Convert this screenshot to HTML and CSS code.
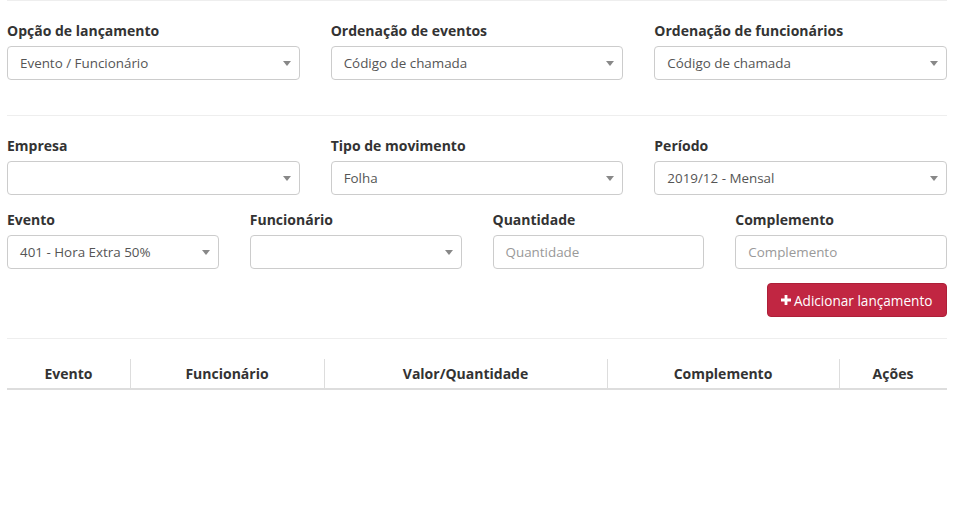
FILE: index.html
```html
<!DOCTYPE html>
<html lang="pt-BR">
<head>
<meta charset="utf-8">
<title>Lançamentos</title>
<link rel="stylesheet" href="styles.css">
</head>
<body>
<div class="page">
  <hr class="sep top">
  <div class="row three">
    <div class="field">
      <label>Opção de lançamento</label>
      <div class="select">Evento / Funcionário<span class="caret"></span></div>
    </div>
    <div class="field">
      <label>Ordenação de eventos</label>
      <div class="select">Código de chamada<span class="caret"></span></div>
    </div>
    <div class="field">
      <label>Ordenação de funcionários</label>
      <div class="select">Código de chamada<span class="caret"></span></div>
    </div>
  </div>
  <hr class="sep mid">
  <div class="row three">
    <div class="field">
      <label>Empresa</label>
      <div class="select"><span class="caret"></span></div>
    </div>
    <div class="field">
      <label>Tipo de movimento</label>
      <div class="select">Folha<span class="caret"></span></div>
    </div>
    <div class="field">
      <label>Período</label>
      <div class="select">2019/12 - Mensal<span class="caret"></span></div>
    </div>
  </div>
  <div class="row four">
    <div class="field">
      <label>Evento</label>
      <div class="select">401 - Hora Extra 50%<span class="caret"></span></div>
    </div>
    <div class="field">
      <label>Funcionário</label>
      <div class="select"><span class="caret"></span></div>
    </div>
    <div class="field">
      <label>Quantidade</label>
      <div class="input placeholder">Quantidade</div>
    </div>
    <div class="field">
      <label>Complemento</label>
      <div class="input placeholder">Complemento</div>
    </div>
  </div>
  <div class="actions">
    <button class="btn-add" type="button"><svg class="plus" viewBox="0 0 10 10" width="10" height="10"><path d="M3.6 0h2.8v3.6H10v2.8H6.4V10H3.6V6.4H0V3.6h3.6z" fill="#fff"/></svg>Adicionar lançamento</button>
  </div>
  <hr class="sep bottom">
  <table class="grid">
    <thead>
      <tr>
        <th class="c1">Evento</th>
        <th class="c2">Funcionário</th>
        <th class="c3">Valor/Quantidade</th>
        <th class="c4">Complemento</th>
        <th class="c5">Ações</th>
      </tr>
    </thead>
  </table>
</div>
</body>
</html>
```
FILE: styles.css
```css
* { box-sizing: border-box; }
html, body { margin: 0; background: #fff; }
body {
  font-family: "Open Sans", "Noto Sans", sans-serif;
  font-size: 13px;
  color: #333;
}
.page {
  width: 940px;
  margin-left: 7px;
}
.sep {
  border: 0;
  border-top: 1px solid #eee;
  margin: 0;
}
.sep.top { margin-bottom: 20px; }
.sep.mid { margin-top: 35px; margin-bottom: 20px; }
.sep.bottom { margin-top: 21px; margin-bottom: 0; }
.row {
  display: grid;
  column-gap: 31px;
}
.row.three { grid-template-columns: repeat(3, 1fr); }
.row.four { grid-template-columns: repeat(4, 1fr); margin-top: 15px; }
.field label {
  display: block;
  font-weight: 700;
  font-size: 14px;
  line-height: 20px;
  color: #333;
  margin-bottom: 5px;
}
.select, .input {
  position: relative;
  height: 34px;
  border: 1px solid #ccc;
  border-radius: 4px;
  padding: 0 12px;
  font-size: 13.4px;
  line-height: 32px;
  color: #555;
  white-space: nowrap;
  overflow: hidden;
}
.placeholder { color: #999; }
.caret {
  position: absolute;
  right: 8px;
  top: 14px;
  width: 0;
  height: 0;
  border-left: 4px solid transparent;
  border-right: 4px solid transparent;
  border-top: 5px solid #888;
}
.actions {
  display: flex;
  justify-content: flex-end;
  margin-top: 14px;
}
.btn-add {
  display: flex;
  align-items: center;
  gap: 3px;
  height: 34px;
  width: 180px;
  padding: 0 0 0 13px;
  background: #c12642;
  border: 1px solid #ad1f38;
  border-radius: 4px;
  color: #fff;
  font-family: "Open Sans", "Noto Sans", sans-serif;
  font-size: 13.6px;
}
.plus { flex: none; }
.grid {
  width: 940px;
  border-collapse: collapse;
  table-layout: fixed;
}
.grid th {
  font-size: 14px;
  font-weight: 700;
  color: #333;
  text-align: center;
  height: 50px;
  padding: 20px 8px 0;
  line-height: 28px;
  border-bottom: 2px solid #ddd;
  background-image: linear-gradient(#ddd, #ddd);
  background-size: 1px 29px;
  background-position: left bottom;
  background-repeat: no-repeat;
}
.grid th.c1 { width: 123px; background-image: none; }
.grid th.c2 { width: 194px; }
.grid th.c3 { width: 283px; }
.grid th.c4 { width: 232px; }
.grid th.c5 { width: 108px; }
```
